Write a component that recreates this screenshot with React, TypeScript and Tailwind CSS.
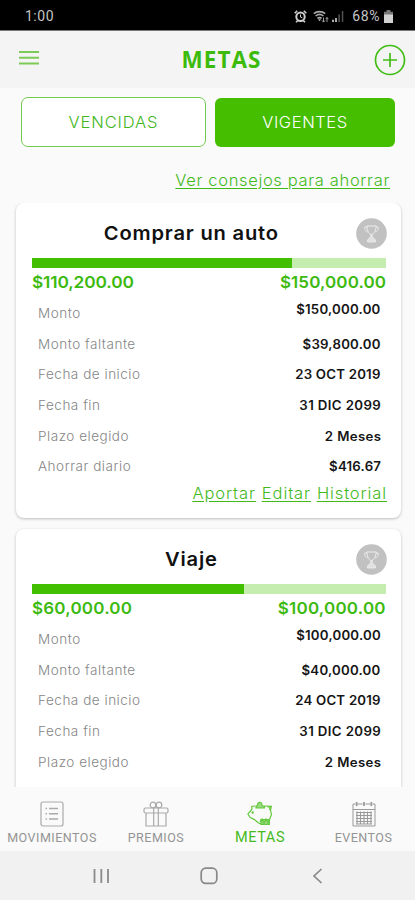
import type { ReactNode } from "react";

type Goal = {
  name: string;
  saved: string;
  target: string;
  percent: number;
  savedClass: string;
  targetClass: string;
  rows: { label: string; value: string; valueClass?: string }[];
  actions: string[];
};

const goals: Goal[] = [
  {
    name: "Comprar un auto",
    saved: "$110,200.00",
    target: "$150,000.00",
    percent: 73.5,
    savedClass: "tracking-[-0.15px] scale-x-[1.05]",
    targetClass: "tracking-[0.1px] scale-x-[1.03]",
    rows: [
      { label: "Monto", value: "$150,000.00" },
      { label: "Monto faltante", value: "$39,800.00" },
      { label: "Fecha de inicio", value: "23 OCT 2019" },
      { label: "Fecha fin", value: "31 DIC 2099", valueClass: "tracking-[0.35px]" },
      { label: "Plazo elegido", value: "2 Meses", valueClass: "tracking-[0.35px]" },
      { label: "Ahorrar diario", value: "$416.67" },
    ],
    actions: ["Aportar", "Editar", "Historial"],
  },
  {
    name: "Viaje",
    saved: "$60,000.00",
    target: "$100,000.00",
    percent: 60,
    savedClass: "tracking-[0.2px] scale-x-[1.03]",
    targetClass: "tracking-[0.2px] scale-x-[1.03]",
    rows: [
      { label: "Monto", value: "$100,000.00" },
      { label: "Monto faltante", value: "$40,000.00" },
      { label: "Fecha de inicio", value: "24 OCT 2019" },
      { label: "Fecha fin", value: "31 DIC 2099", valueClass: "tracking-[0.35px]" },
      { label: "Plazo elegido", value: "2 Meses", valueClass: "tracking-[0.35px]" },
    ],
    actions: [],
  },
];

function StatusBar() {
  return (
    <div className="flex h-[31px] shrink-0 items-center justify-between border-b border-[#777] bg-black pt-0.5 pr-[22px] pl-[25px] font-['Roboto',sans-serif] text-[14px] text-[#c4c4c4]">
      <span className="tracking-[0.5px]">1:00</span>
      <div className="flex items-center">
        <svg width="13" height="13" viewBox="0 0 13 13" fill="none" stroke="#d0d0d0">
          <circle cx="6.5" cy="6.8" r="4.2" strokeWidth="2" />
          <path d="M6.5 4.5v2.6l1.8.6" strokeWidth="1" />
          <path d="M.7 3.3 3.2.8M12.3 3.3 9.8.8M2 12.3l1.6-1.6M11 12.3l-1.6-1.6" strokeWidth="1.6" />
        </svg>
        <svg className="ml-1.5" width="16" height="13" viewBox="0 0 16 13" fill="none" stroke="#aaa">
          <path d="M.8 3.6C4 1 9 1 12.2 3.6M2.6 6c2.4-2 5.6-2 7.8 0M4.4 8.4c1.3-1 3-1 4.2 0" strokeWidth="1.6" />
          <path d="m5 9.2 1.5 2L8 9.2z" fill="#bbb" stroke="none" />
          <path d="M10.5 7.5v4.5m-1.5-1.5 1.5 1.6 1.5-1.6M14 12V7.5m-1.3 1.6L14 7.5l1.3 1.6" strokeWidth=".9" />
        </svg>
        <svg className="ml-[3px]" width="12" height="13" viewBox="0 0 12 13">
          <path d="M0 12V9.8h2V12zM3 12V8h2v4z" fill="#aaa" />
          <path d="M6.3 12V4.5h1.6V12zM9.8 12V1h1.5v11z" fill="#505050" />
        </svg>
        <span className="ml-[8px] tracking-[0.6px]">68%</span>
        <svg className="ml-[4px]" width="9" height="13" viewBox="0 0 9 13">
          <path d="M2.5 0h4v1.8H9V13H0V1.8h2.5z" fill="#777" />
          <path d="M0 4.5h9V13H0z" fill="#d2d2d2" />
        </svg>
      </div>
    </div>
  );
}

function Header() {
  return (
    <header className="flex h-[57px] shrink-0 items-center justify-between bg-[#f4f4f4] pr-[9px] pl-[19px]">
      <svg className="mb-[3px]" width="20" height="16" viewBox="0 0 20 16" stroke="#7ccb57" strokeWidth="2">
        <path d="M0 2h20M0 7.7h20M0 13.4h20" />
      </svg>
      <h1 className="ml-[30px] font-['Open_Sans',sans-serif] text-[22.5px] font-bold tracking-[1px] text-[#3dbb0d]">
        METAS
      </h1>
      <svg width="32" height="32" viewBox="0 0 32 32" fill="none" stroke="#42bd16" strokeWidth="1.7">
        <circle cx="16" cy="16" r="14.5" />
        <path d="M16 9v14M9 16h14" />
      </svg>
    </header>
  );
}

function Trophy() {
  return (
    <svg className="-mr-0.5 mt-[15px] shrink-0" width="31" height="31" viewBox="0 0 31 31" fill="none" stroke="#eee">
      <circle cx="15.5" cy="15.5" r="15.3" fill="#c1c1c1" stroke="none" />
      <path d="M10.7 8h9.6l-.6 3.4c-.5 2.4-1.9 4-4.2 5.6-2.3-1.6-3.7-3.2-4.2-5.6z" strokeWidth="1" />
      <path d="M10.8 9H8.6l.3 2.2c.3 1.4 1.2 2.3 2.8 2.9M20.2 9h2.2l-.3 2.2c-.3 1.4-1.2 2.3-2.8 2.9" strokeWidth=".8" />
      <path d="M14.8 16.8h1.4v2l3.3 3V24h-8v-2.2l3.3-3z" fill="#e0e0e0" strokeWidth=".8" />
    </svg>
  );
}

function GoalCard({ goal }: { goal: Goal }) {
  return (
    <section className="h-[315px] shrink-0 rounded-lg bg-white px-4 shadow-[0_1px_3px_rgba(0,0,0,0.25)]">
      <div className="flex h-[55px] w-[353px]">
        <h2 className="mt-[17px] flex-1 scale-x-[1.06] pr-[5px] text-center text-[19px] leading-7 font-semibold tracking-[0.75px] text-[#111]">
          {goal.name}
        </h2>
        <Trophy />
      </div>
      <div className="h-[10px] w-[354px] bg-[#c5edb0]">
        <div className="h-full bg-[#41bf00]" style={{ width: `${goal.percent}%` }} />
      </div>
      <div className="flex h-[29px] w-[354px] justify-between text-[16.5px] leading-[29px] font-semibold text-[#3dba10]">
        <span className={`origin-left ${goal.savedClass}`}>{goal.saved}</span>
        <span className={`origin-right ${goal.targetClass}`}>{goal.target}</span>
      </div>
      <dl className="pr-1 pl-[6px]">
        {goal.rows.map((row, i) => (
          <div key={row.label} className="flex h-[30.7px] justify-between leading-[33px]">
            <dt className="origin-left scale-x-[1.04] text-[13px] font-light tracking-[0.5px] text-[#858585]">
              {row.label}
            </dt>
            <dd
              className={`origin-right scale-x-[1.06] text-[12.5px] font-semibold text-[#151515] ${i === 0 ? "-mt-1" : ""} ${row.valueClass ?? "tracking-[0.2px]"}`}
            >
              {row.value}
            </dd>
          </div>
        ))}
      </dl>
      <div className="flex h-6 w-[355px] justify-end gap-[6px] text-[16.5px] leading-[25px] font-light tracking-[0.9px] text-[#42b91b] underline underline-offset-2">
        {goal.actions.map((action) => (
          <a key={action}>{action}</a>
        ))}
      </div>
    </section>
  );
}

function NavItem({ label, className, children }: { label: string; className: string; children: ReactNode }) {
  return (
    <div className={`flex flex-col items-center font-['Roboto',sans-serif] ${className}`}>
      {children}
      <span>{label}</span>
    </div>
  );
}

function BottomNav() {
  return (
    <nav className="grid h-[64px] shrink-0 grid-cols-[104px_104px_104px_103px] bg-[#fafafa] pt-[14px]">
      <NavItem label="MOVIMIENTOS" className="text-[12.5px] leading-[18px] tracking-[0.5px] text-[#949494]">
        <svg className="mb-0.5" width="24" height="26" viewBox="0 0 24 26" fill="none" stroke="#aaa" strokeWidth="1.2">
          <rect x="1" y="1" width="22" height="24" rx="2" />
          <path d="M9 7.5h9M9 12.7h9M9 18h9M5.5 7.5H7M5.5 12.7H7M5.5 18H7" strokeWidth="1.5" />
        </svg>
      </NavItem>
      <NavItem label="PREMIOS" className="text-[12.5px] leading-[18px] tracking-[0.5px] text-[#949494]">
        <svg className="mb-0.5" width="26" height="26" viewBox="0 0 26 26" fill="none" stroke="#aaa" strokeWidth="1.2">
          <rect x="1" y="7" width="24" height="5" rx="1.5" />
          <path d="M3 12v13h20V12M10.7 7v18M15.3 7v18M13 7V4" />
          <circle cx="10" cy="4" r="2.8" />
          <circle cx="16" cy="4" r="2.8" />
        </svg>
      </NavItem>
      <NavItem label="METAS" className="text-[14.5px] leading-[17px] tracking-[0.6px] text-[#46ba1d]">
        <svg className="mb-0.5" width="26" height="26" viewBox="0 0 26 26" fill="none" stroke="#65c83d" strokeWidth="1.2">
          <path d="M8 5 4.8 5.5v3L.9 13l2.4 3.6 4.2 2 4 3.4 2.5 1M18 5l6.3.3-.8 4 1 4.2-2 5" />
          <path d="M20.5 5.8h3l-1.2 3" />
          <path d="M9 7h8.5V5h-2.2L14.5 2.2c-1-1-2.5-1-3.5 0L10 5H9zM14 18.5h8v4.8h-8z" fill="#99dc80" />
          <path d="M13 21l2-3 2 4 2-4 2 4M22.3 18v5.5H19" />
          <circle cx="5.7" cy="11.5" r=".6" />
        </svg>
      </NavItem>
      <NavItem label="EVENTOS" className="text-[12.5px] leading-[18px] tracking-[0.5px] text-[#949494]">
        <svg className="mb-0.5" width="24" height="26" viewBox="0 0 24 26" fill="none" stroke="#999" strokeWidth="1">
          <path d="M1 3h2.5M6 3h4.5M13.5 3H18M20.5 3H23v22H1V3M1 8.5h22" />
          <path d="M4.7 1v4M12 1v4M19.3 1v4" strokeWidth="1.8" />
          <path d="M4 11.5h16M4 14.5h16M4 17.5h16M4 20.5h16M4 23h16M5 10.5v13M8.5 10.5v13M12 10.5v13M15.5 10.5v13M19 10.5v13" strokeWidth="1.1" />
        </svg>
      </NavItem>
    </nav>
  );
}

function SystemNav() {
  return (
    <div className="flex h-[49px] shrink-0 items-center bg-[#f1f1f1] pl-[92px]">
      <svg width="18" height="18" viewBox="0 0 18 18" stroke="#8a8a8a" strokeWidth="1.8">
        <path d="M2.5 2v14M9.3 2v14M16 2v14" />
      </svg>
      <svg className="ml-[90px]" width="18" height="18" viewBox="0 0 18 18" fill="none" stroke="#888" strokeWidth="1.7">
        <rect x="1.2" y="1.2" width="15.6" height="15.2" rx="4.5" />
      </svg>
      <svg className="ml-[94px]" width="12" height="18" viewBox="0 0 12 18" fill="none" stroke="#888" strokeWidth="1.7">
        <path d="M9.5 2 2 9l7.5 7" />
      </svg>
    </div>
  );
}

export default function App() {
  return (
    <div className="flex h-[900px] w-[415px] flex-col overflow-hidden bg-[#fafafa] font-['Inter',sans-serif]">
      <StatusBar />
      <Header />
      <main className="flex min-h-0 flex-1 flex-col overflow-hidden px-4 pt-[9px]">
        <div className="flex h-[50px] shrink-0 gap-[9px] pr-1 pl-[5px]">
          <button className="w-[185px] rounded-[7px] border border-[#74c94f] bg-white text-[16.5px] font-light tracking-[0.9px] text-[#42b61c]">
            VENCIDAS
          </button>
          <button className="my-[0.5px] flex-1 rounded-[6px] bg-[#45be00] text-[16.5px] font-light tracking-[0.6px] text-white">
            VIGENTES
          </button>
        </div>
        <div className="mt-[21px] mb-[11px] flex h-6 shrink-0 justify-end pr-[9px]">
          <a className="text-[16.5px] leading-[25px] font-light tracking-[0.65px] text-[#42b91b] underline underline-offset-2">
            Ver consejos para ahorrar
          </a>
        </div>
        <div className="-mx-4 flex min-h-0 flex-1 flex-col gap-[11px] overflow-hidden pr-[14px] pl-4">
          {goals.map((goal) => (
            <GoalCard key={goal.name} goal={goal} />
          ))}
        </div>
      </main>
      <BottomNav />
      <SystemNav />
    </div>
  );
}
